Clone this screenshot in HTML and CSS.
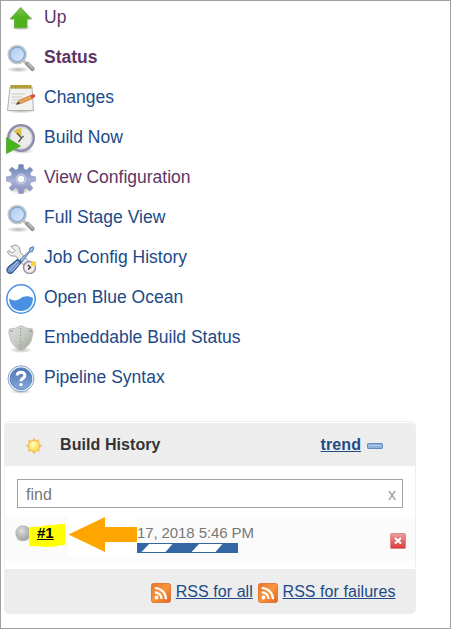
FILE: index.html
```html
<!DOCTYPE html>
<html lang="en">
<head>
<meta charset="utf-8">
<title>Build History</title>
<link rel="stylesheet" href="styles.css">
</head>
<body>
<svg width="0" height="0" class="defs" aria-hidden="true">
  <defs>
    <linearGradient id="green" x1="0" y1="0" x2="0" y2="1"><stop offset="0" stop-color="#83bd50"/><stop offset=".5" stop-color="#4fb51c"/><stop offset="1" stop-color="#4db015"/></linearGradient>
    <linearGradient id="gear" x1="0" y1="0" x2="0" y2="1"><stop offset="0" stop-color="#6580b0"/><stop offset=".55" stop-color="#a9b2d8"/><stop offset="1" stop-color="#8a8dbd"/></linearGradient>
    <linearGradient id="glass" x1="0" y1="0" x2="1" y2="1"><stop offset="0" stop-color="#a4c6ef"/><stop offset="1" stop-color="#e0edfb"/></linearGradient>
    <linearGradient id="steel" x1="0" y1="0" x2="1" y2="1"><stop offset="0" stop-color="#e0e2de"/><stop offset=".5" stop-color="#c8cbc4"/><stop offset="1" stop-color="#9a9d96"/></linearGradient>
    <linearGradient id="help" x1="0" y1="0" x2="0" y2="1"><stop offset="0" stop-color="#4a74b2"/><stop offset="1" stop-color="#86a9d8"/></linearGradient>
    <linearGradient id="feed" x1="0" y1="0" x2="1" y2="1"><stop offset="0" stop-color="#e8762c"/><stop offset=".5" stop-color="#f9953a"/><stop offset="1" stop-color="#dc6424"/></linearGradient>
    <linearGradient id="red" x1="0" y1="0" x2="0" y2="1"><stop offset="0" stop-color="#e9a0a0"/><stop offset="1" stop-color="#d8383c"/></linearGradient>
    <radialGradient id="ball" cx=".4" cy=".35" r=".65"><stop offset="0" stop-color="#dedede"/><stop offset=".6" stop-color="#b8b8b8"/><stop offset="1" stop-color="#a2a2a2"/></radialGradient>
    <radialGradient id="sun" cx=".4" cy=".35" r=".7"><stop offset="0" stop-color="#fffbc0"/><stop offset="1" stop-color="#fcd94a"/></radialGradient>
    <radialGradient id="shade"><stop offset="0" stop-color="#000" stop-opacity=".28"/><stop offset="1" stop-color="#000" stop-opacity="0"/></radialGradient>
    <symbol id="search" viewBox="0 0 30 30">
      <ellipse cx="12" cy="25.500" rx="12" ry="3" fill="url(#shade)"/>
      <path d="M17.500 17 21 20" stroke="#c4c4c4" stroke-width="3"/>
      <path d="M21.500 20 26.500 24.800" stroke="#929292" stroke-width="4.400" stroke-linecap="round"/>
      <path d="M22 19.800 26.500 24" stroke="#c0c0c0" stroke-width="1.600" stroke-linecap="round"/>
      <circle cx="11.200" cy="10.500" r="8.600" fill="url(#glass)" stroke="#c6c8c6" stroke-width="2.400"/>
      <circle cx="11.200" cy="10.500" r="7.300" fill="none" stroke="#7b9fd3" stroke-width="1.200"/>
    </symbol>
    <symbol id="rss" viewBox="0 0 20 20">
      <rect x=".5" y=".5" width="19" height="19" rx="2" fill="url(#feed)" stroke="#e27a3c"/>
      <circle cx="5.500" cy="14.500" r="1.900" fill="#fff"/>
      <path d="M3.800 9.300a6.800 6.800 0 0 1 6.800 6.800M3.800 5a11.200 11.200 0 0 1 11.200 11.200" fill="none" stroke="#fff" stroke-width="2.200"/>
    </symbol>
  </defs>
</svg>
<main class="page">
  <nav class="tasks">
    <a class="task visited">
      <svg class="icon" viewBox="0 0 30 30"><ellipse cx="15" cy="24" rx="11" ry="2.500" fill="url(#shade)"/><path d="M14.700 3.500 25.500 15H21v8.800H8.500V15H4Z" fill="url(#green)" stroke="#6dab48" stroke-linejoin="round"/></svg>
      <span>Up</span></a>
    <a class="task visited current"><svg class="icon"><use href="#search"/></svg><span>Status</span></a>
    <a class="task">
      <svg class="icon" viewBox="0 0 30 30"><ellipse cx="15" cy="27" rx="15" ry="2.500" fill="url(#shade)"/><path d="M4 3h22l1.500 23.500h-26Z" fill="#f2f2f0" stroke="#b0b0ac" stroke-linejoin="round"/><path d="M4.500 1h21v3.500h-21Z" fill="#bea83e"/><path d="M6 1v4m3-4v4m3-4v4m3-4v4m3-4v4m3-4v4m3-4v4" stroke="#958430" stroke-width=".8"/><path d="M6 10h13M6 13h10M5.500 16h10M5 19h7" stroke="#c7c7c7"/><path d="M10 20.500 13.500 16l11-4.500 1.800 3.200L15 19.500Z" fill="#e8a353" stroke="#b97a45" stroke-width=".7"/><path d="m10 20.500 2.500-3 1.500 2.200Z" fill="#554434"/><path d="m24 11.600 3.500-1.600q2.300.5 1.500 3L26 14.800Z" fill="#d95142"/></svg>
      <span>Changes</span></a>
    <a class="task">
      <svg class="icon" viewBox="0 0 30 30"><ellipse cx="16" cy="27" rx="12" ry="3" fill="url(#shade)"/><circle cx="15" cy="14" r="12.700" fill="#ecece8" stroke="#8e8eaa" stroke-width="2.600"/><circle cx="15" cy="14" r="10.700" fill="none" stroke="#c9c9d4" stroke-width=".8"/><path d="M15.500 14 7.500 7.500Q11 4 15.500 4Z" fill="#dfc14f"/><path d="m11 9 4.500 5-3 4M15.500 14l2-2" stroke="#5a5a5a" stroke-width="1.400" fill="none"/><path d="m.5 13.500 14 8.500-14 7.500Z" fill="#45b51e" stroke="#67a744"/></svg>
      <span>Build Now</span></a>
    <a class="task visited">
      <svg class="icon" viewBox="0 0 30 30"><ellipse cx="15" cy="26" rx="12" ry="4" fill="url(#shade)"/><path fill-rule="evenodd" d="m12 5 .8-4.500h4.400L18 5l2.500 1L24 3l3 3-3 3.500 1 2.500 4.500.8v4.400L25 18l-1 2.500 3 3.500-3 3-3.500-3-2.500 1-.8 4.500h-4.400L12 25l-2.500-1L6 27l-3-3 3-3.500L5 18l-4.500-.8v-4.400L5 12l1-2.500L3 6l3-3 3.500 3ZM15 11.200a3.800 3.800 0 1 0 0 7.600 3.800 3.800 0 0 0 0-7.600Z" fill="url(#gear)" stroke="#8c99c2" stroke-width=".6"/><circle cx="15" cy="15" r="4.800" fill="none" stroke="#c8cde4" stroke-width="1.200"/></svg>
      <span>View Configuration</span></a>
    <a class="task"><svg class="icon"><use href="#search"/></svg><span>Full Stage View</span></a>
    <a class="task">
      <svg class="icon" viewBox="0 0 30 30"><path d="M5 2.500 9.500 1q5 1 4.500 7l13 14-4.500 4.500L9.500 12Q3.500 13 1.500 8l1-1.500 4 2.500L9 6.500Z" fill="#ededeb" stroke="#979895"/><path d="m14 16 9.500-9 .5-3 3-1.500.8 1-1.300 4-3 .5L16 18Z" fill="#a6c3e8" stroke="#4d77ae"/><path d="m11.500 15.500 3.500 3-8.500 10q-3 2-5-.5-1.500-2.500 1-5Z" fill="#6d93c8" stroke="#2f548b" stroke-width="1.200"/><path d="m3.500 26 8-8.500M6 27.500l7-8" stroke="#bdd1eb" stroke-width="1"/><circle cx="23.500" cy="23.500" r="6" fill="#eeece7" stroke="#a288aa" stroke-width="1.500"/><path d="M25 22v-4.500h5V22Z" fill="#f0d53c"/><path d="m22 21 2.500 2.500-2.500 2" stroke="#37332e" stroke-width="1.300" fill="none"/></svg>
      <span>Job Config History</span></a>
    <a class="task">
      <svg class="icon" viewBox="0 0 30 30"><circle cx="15" cy="15" r="14.200" fill="#fff" stroke="#4a90e2" stroke-width="1.500"/><path d="M3.200 14.500c4 2.500 7 2.500 10.800.2 4.500-3 8.500-3 13-.7C27 22 22 27 15 27S3 22 3.200 14.500Z" fill="#4a90e2"/></svg>
      <span>Open Blue Ocean</span></a>
    <a class="task">
      <svg class="icon" viewBox="0 0 30 30"><ellipse cx="15" cy="26" rx="12" ry="3" fill="url(#shade)"/><path d="M15 1.500q5 3.500 11.500 3.500 1.500 3-.5 8-1 9-11 13.500Q5 22 4 13 1.500 8 3.500 5 10 5 15 1.500Z" fill="url(#steel)" stroke="#c0c2bd"/><path d="M14.500 4v22" stroke="#999b95" stroke-width="1.200" stroke-dasharray="1.300 2"/><path d="M4 7h3m16 0h3" stroke="#858781"/></svg>
      <span>Embeddable Build Status</span></a>
    <a class="task">
      <svg class="icon" viewBox="0 0 30 30"><ellipse cx="15" cy="27.500" rx="11" ry="2.500" fill="url(#shade)"/><circle cx="15" cy="14.700" r="13" fill="#e6edf7" stroke="#89a6d0"/><circle cx="15" cy="14.700" r="10.800" fill="url(#help)" stroke="#5a82b9"/><path d="M11.200 11.500q0-3.300 3.800-3.300t3.800 3.200q0 1.800-2 3-1.800 1-1.800 2.800" fill="none" stroke="#fff" stroke-width="3"/><circle cx="15" cy="20.600" r="1.700" fill="#fff"/></svg>
      <span>Pipeline Syntax</span></a>
  </nav>
  <section class="history">
    <header class="head">
      <svg class="sun" viewBox="0 0 18 18"><path d="m9 .5 1.700 3 3.800-1.300-.8 3.800 3.800 3-3.500 1.800.8 3.700-3.800-.8L9 17.500l-2-3.600-4 .9.900-4L.5 9l3.400-2.300-1-4 4 1.100Z" fill="#f4bd70"/><circle cx="9" cy="9" r="5.600" fill="url(#sun)" stroke="#f0b848" stroke-width=".8"/></svg>
      <h2>Build History</h2>
      <a class="trend">trend</a>
      <svg class="collapse" viewBox="0 0 16 6"><rect x=".5" y=".5" width="15" height="5" rx=".8" fill="#8fb0d8" stroke="#6089c0"/><path d="M2 2.500h12" stroke="#b5cae6"/></svg>
    </header>
    <div class="find"><span>find</span><span class="clear">x</span></div>
    <div class="build">
      <svg class="ball" viewBox="0 0 16 17"><ellipse cx="8" cy="14.500" rx="8" ry="2.500" fill="url(#shade)"/><circle cx="8" cy="8" r="7.700" fill="url(#ball)"/></svg>
      <div class="number"><svg class="marker" viewBox="0 0 36 23"><path d="M0 3 14 2.500 15 1.500 26 1V.5L36 0V21l-7 .5-1 1L13 23l-1-.7H0Z" fill="#ff0"/></svg><a>#1</a></div>
      <svg class="arrow" viewBox="0 0 69 40"><path d="M0 0h69v40H0Z" fill="#fff"/><path d="M.5 17.500 37 0v10h32v15H37v10Z" fill="orange"/></svg>
      <div class="info"><span class="date">17, 2018 5:46 PM</span>
        <svg class="progress" viewBox="0 0 101 10"><path d="M0 0h101v10H0Z" fill="#3465a4"/><path d="M12 1h23.500l-7 8H4.500ZM62 1h23.500l-7 8H54.500Z" fill="#fff"/></svg></div>
      <svg class="stop" viewBox="0 0 16 16"><rect x=".5" y=".5" width="15" height="15" rx="1" fill="url(#red)" stroke="#dc8688"/><path d="m5 5 6 5.500M11 5l-6 5.500" stroke="#fff" stroke-width="2"/></svg>
    </div>
    <footer class="feeds">
      <svg class="rss"><use href="#rss"/></svg><a>RSS for all</a>
      <svg class="rss"><use href="#rss"/></svg><a>RSS for failures</a>
    </footer>
  </section>
</main>
</body>
</html>
```
FILE: styles.css
```css
* { box-sizing: border-box; }
body {
  margin: 0;
  font-family: "Liberation Sans", Arial, sans-serif;
  background: #fff;
}
svg { display: block; flex: none; }
.defs { position: absolute; }
.page {
  height: 629px;
  border: 1px solid #a0a0a0;
  padding: 3px 0 0 3px;
}
.tasks { padding-left: 2px; height: 417px; }
.task {
  display: flex;
  height: 40px;
  align-items: flex-start;
  gap: 8px;
  font-size: 17.5px;
  line-height: 26px;
  color: #204a87;
  white-space: nowrap;
}
.visited { color: #5c3566; }
.current { font-weight: bold; }
.icon { width: 30px; height: 30px; }
.history {
  width: 412px;
  height: 193px;
  border: 1px solid #eee;
  border-radius: 5px;
  font-size: 16px;
  overflow: hidden;
}
.head {
  display: flex;
  align-items: center;
  height: 43px;
  margin-top: 1px;
  padding-left: 20px;
  background: #ededed;
  border-radius: 4px 4px 0 0;
}
.sun { width: 18px; height: 18px; margin-top: 2px; }
.head h2 {
  margin: 0 0 0 17px;
  width: 260.5px;
  font-size: 16px;
  line-height: 20px;
  letter-spacing: 0.08px;
  color: #333;
}
.trend { font-weight: bold; color: #204a87; text-decoration: underline; letter-spacing: 0.1px; }
.collapse { width: 16px; height: 6px; margin: 3px 0 0 6px; }
.find {
  display: flex;
  justify-content: space-between;
  align-items: center;
  height: 29px;
  width: 386px;
  margin: 13px 0 0 12px;
  padding: 2px 6px 0 8px;
  border: 1px solid #a2a2a2;
  color: #777;
}
.clear { color: #999; }
.build {
  display: flex;
  align-items: flex-start;
  height: 44px;
  margin-top: 9px;
  padding-left: 10px;
  background: #fbfbfb;
}
.ball { width: 16px; height: 17px; margin-top: 8px; }
.number {
  position: relative;
  width: 37px;
  padding: 7px 0 0 6px;
  font-weight: bold;
  font-size: 15px;
  line-height: 18px;
  text-decoration: underline;
  color: #000;
}
.number a { position: relative; }
.marker { position: absolute; left: -2px; top: 7px; width: 36px; height: 23px; }
.arrow { width: 69px; height: 40px; }
.info { width: 253px; padding-top: 7px; }
.date {
  display: block;
  height: 19px;
  font-size: 15px;
  line-height: 18px;
  letter-spacing: -0.1px;
  color: #777;
}
.progress { width: 101px; height: 10px; }
.stop { width: 16px; height: 16px; margin-top: 16px; }
.feeds {
  display: flex;
  align-items: flex-start;
  height: 45px;
  margin-top: 8px;
  padding: 13px 0 0 146px;
  background: #ededed;
  color: #204a87;
}
.rss { width: 20px; height: 20px; margin-top: 1px; }
.feeds a { margin: 0 5px 0 4.7px; line-height: 20px; letter-spacing: 0.06px; text-decoration: underline; white-space: nowrap; }
```
